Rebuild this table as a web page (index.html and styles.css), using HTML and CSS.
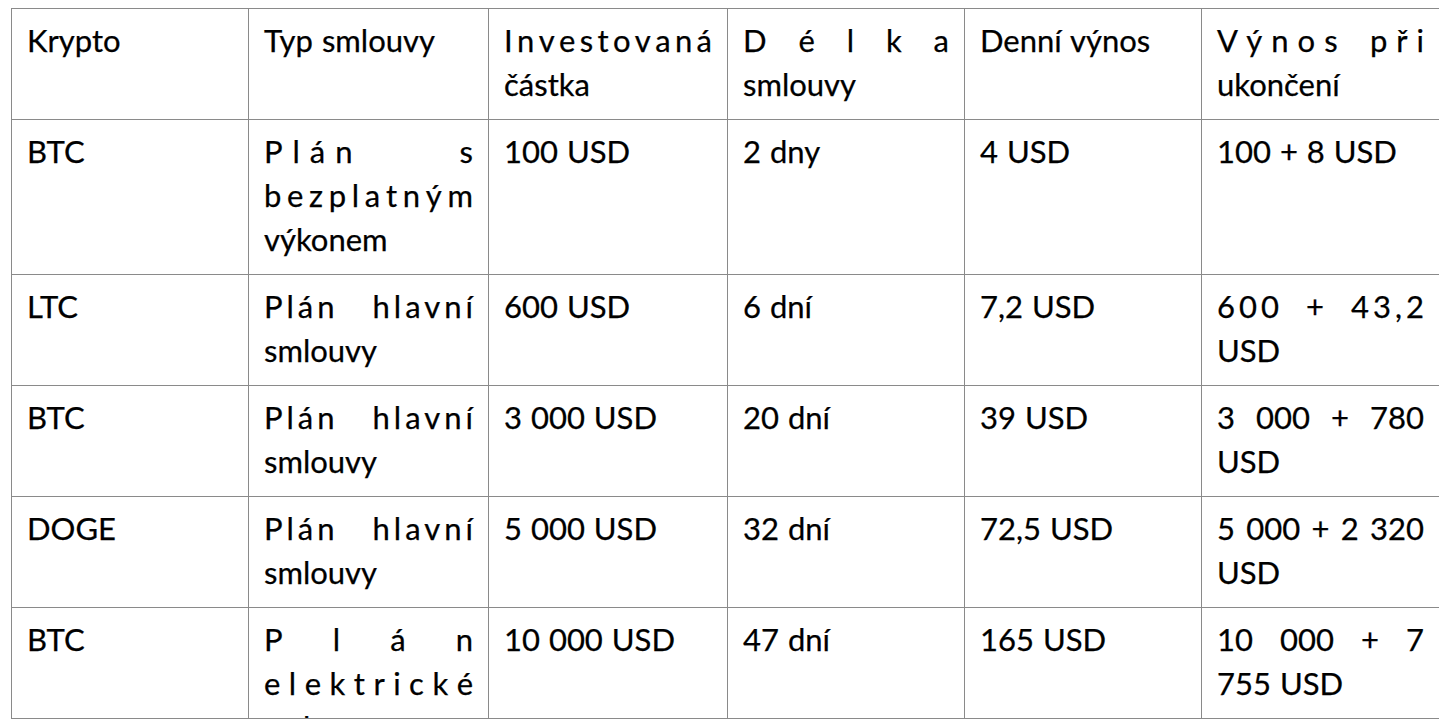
FILE: index.html
```html
<!DOCTYPE html>
<html lang="cs">
<head>
<meta charset="utf-8">
<title>Smlouvy</title>
<link rel="stylesheet" href="styles.css">
</head>
<body>
<div class="sheet">
  <table class="plans">
    <colgroup>
      <col class="c1"><col class="c2"><col class="c3"><col class="c4"><col class="c5"><col class="c6">
    </colgroup>
    <tr>
      <td><span class="line">Krypto</span></td>
      <td><span class="line">Typ smlouvy</span></td>
      <td><span class="line dist"><span>I</span><span>n</span><span>v</span><span>e</span><span>s</span><span>t</span><span>o</span><span>v</span><span>a</span><span>n</span><span>á</span></span><span class="line">částka</span></td>
      <td><span class="line dist"><span>D</span><span>é</span><span>l</span><span>k</span><span>a</span></span><span class="line">smlouvy</span></td>
      <td><span class="line">Denní výnos</span></td>
      <td><span class="line just ls10"><span>Výnos</span><span>při</span></span><span class="line">ukončení</span></td>
    </tr>
    <tr>
      <td><span class="line">BTC</span></td>
      <td><span class="line just ls11"><span>Plán</span><span>s</span></span><span class="line dist"><span>b</span><span>e</span><span>z</span><span>p</span><span>l</span><span>a</span><span>t</span><span>n</span><span>ý</span><span>m</span></span><span class="line">výkonem</span></td>
      <td><span class="line">100 USD</span></td>
      <td><span class="line">2 dny</span></td>
      <td><span class="line">4 USD</span></td>
      <td><span class="line">100 + 8 USD</span></td>
    </tr>
    <tr>
      <td><span class="line">LTC</span></td>
      <td><span class="line just ls4"><span>Plán</span><span>hlavní</span></span><span class="line">smlouvy</span></td>
      <td><span class="line">600 USD</span></td>
      <td><span class="line">6 dní</span></td>
      <td><span class="line">7,2 USD</span></td>
      <td><span class="line just ls4"><span>600</span><span>+</span><span>43,2</span></span><span class="line">USD</span></td>
    </tr>
    <tr>
      <td><span class="line">BTC</span></td>
      <td><span class="line just ls4"><span>Plán</span><span>hlavní</span></span><span class="line">smlouvy</span></td>
      <td><span class="line">3 000 USD</span></td>
      <td><span class="line">20 dní</span></td>
      <td><span class="line">39 USD</span></td>
      <td><span class="line just"><span>3</span><span>000</span><span>+</span><span>780</span></span><span class="line">USD</span></td>
    </tr>
    <tr>
      <td><span class="line">DOGE</span></td>
      <td><span class="line just ls4"><span>Plán</span><span>hlavní</span></span><span class="line">smlouvy</span></td>
      <td><span class="line">5 000 USD</span></td>
      <td><span class="line">32 dní</span></td>
      <td><span class="line">72,5 USD</span></td>
      <td><span class="line just"><span>5</span><span>000</span><span>+</span><span>2</span><span>320</span></span><span class="line">USD</span></td>
    </tr>
    <tr>
      <td><span class="line">BTC</span></td>
      <td><span class="line dist"><span>P</span><span>l</span><span>á</span><span>n</span></span><span class="line dist"><span>e</span><span>l</span><span>e</span><span>k</span><span>t</span><span>r</span><span>i</span><span>c</span><span>k</span><span>é</span></span><span class="line">smlouvy</span></td>
      <td><span class="line">10 000 USD</span></td>
      <td><span class="line">47 dní</span></td>
      <td><span class="line">165 USD</span></td>
      <td><span class="line just"><span>10</span><span>000</span><span>+</span><span>7</span></span><span class="line">755 USD</span></td>
    </tr>
  </table>
</div>
</body>
</html>
```

FILE: styles.css
```css
html, body {
  margin: 0;
  padding: 0;
  background: #ffffff;
}

body {
  font-family: "Lato", "Liberation Sans", sans-serif;
  font-size: 31px;
  word-spacing: 1px;
  color: #000000;
  -webkit-text-stroke: 0.25px #000000;
}

.sheet {
  margin: 8px 0 0 11px;
  width: 1428px;
  height: 710px;
  overflow: hidden;
  border-bottom: 1px solid #8a8a8a;
}

.plans {
  border-collapse: collapse;
  table-layout: fixed;
  width: 1428px;
}

.c1 { width: 237px; }
.c2 { width: 240px; }
.c3 { width: 239px; }
.c4 { width: 237px; }
.c5 { width: 237px; }
.c6 { width: 238px; }

.plans td {
  border: 1px solid #8a8a8a;
  padding: 9px 15px 13px 15px;
  vertical-align: top;
  line-height: 44px;
}

.line {
  display: block;
  white-space: nowrap;
  height: 44px;
}

.dist,
.just {
  display: flex;
  justify-content: space-between;
}

.ls4 > span { letter-spacing: 4px; }
.ls4 > span:last-child { margin-right: -4px; }
.ls10 > span { letter-spacing: 9px; }
.ls10 > span:last-child { margin-right: -9px; }
.ls11 > span { letter-spacing: 10px; }
.ls11 > span:last-child { margin-right: -10px; }
```
